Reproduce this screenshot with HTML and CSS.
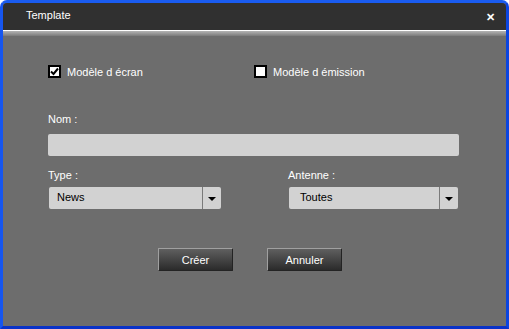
FILE: index.html
```html
<!DOCTYPE html>
<html lang="fr">
<head>
    <meta charset="UTF-8">
    <title>Template</title>
    <link rel="stylesheet" href="styles.css">
</head>
<body>
    <div class="window">
        <div class="titlebar">
            <span class="title">Template</span>
            <span class="close">&#x2715;</span>
        </div>
        <div class="separator"></div>
        <div class="content">
            <div class="checks">
                <label class="check">
                    <span class="box checked">
                        <svg width="9" height="9" viewBox="0 0 9 9"><path d="M1 4.5 L3.5 7 L8 1.5" fill="none" stroke="#000" stroke-width="2"/></svg>
                    </span>
                    Modèle d écran
                </label>
                <label class="check">
                    <span class="box"></span>
                    Modèle d émission
                </label>
            </div>

            <div class="field-label name-label">Nom :</div>
            <div class="textbox"></div>

            <div class="selects">
                <div class="group">
                    <div class="field-label">Type :</div>
                    <div class="select type-select">
                        <span class="select-value">News</span>
                        <span class="select-arrow"></span>
                    </div>
                </div>
                <div class="group">
                    <div class="field-label">Antenne :</div>
                    <div class="select antenna-select">
                        <span class="select-value">Toutes</span>
                        <span class="select-arrow"></span>
                    </div>
                </div>
            </div>

            <div class="buttons">
                <button type="button" class="btn">Créer</button>
                <button type="button" class="btn">Annuler</button>
            </div>
        </div>
    </div>
</body>
</html>
```

FILE: styles.css
```css
body {
    margin: 0;
    padding: 0;
    background-color: #ffffff;
    font-family: "Liberation Sans", Arial, sans-serif;
    font-size: 11px;
    color: #ffffff;
}
.window {
    width: 509px;
    height: 329px;
    box-sizing: border-box;
    border: 3px solid #0b45e0;
    border-top-color: #1a5cf0;
    border-left-color: #1656f0;
    border-bottom-color: #0a32c8;
    border-radius: 7px 7px 0 0;
    background-color: #6d6d6d;
    overflow: hidden;
}
.titlebar {
    height: 27px;
    background-color: #303030;
    display: flex;
    align-items: center;
    justify-content: space-between;
    padding: 0 11px 0 23px;
}
.title {
    font-size: 11px;
    margin-top: -4px;
}
.close {
    font-size: 11px;
    font-weight: bold;
    margin-top: 2px;
}
.separator {
    height: 5px;
    border-top: 1px solid #ffffff;
    background: linear-gradient(#b4b4b4, #7a7a7a);
}
.content {
    padding: 29px 44px 0 45px;
}
.checks {
    display: grid;
    grid-template-columns: 206px auto;
    height: 13px;
}
.check {
    display: flex;
    align-items: center;
    gap: 6px;
}
.box {
    width: 9px;
    height: 9px;
    border: 2px solid #000;
    background-color: #fff;
    display: flex;
    align-items: center;
    justify-content: center;
}
.field-label {
    height: 13px;
    line-height: 13px;
}
.name-label {
    margin-top: 35px;
}
.textbox {
    margin-top: 8px;
    width: 411px;
    height: 22px;
    background-color: #d2d2d2;
    border-radius: 2px;
}
.selects {
    display: grid;
    grid-template-columns: 240px 170px;
    margin-top: 13px;
}
.select {
    margin-top: 5px;
    height: 22px;
    background-color: #d2d2d2;
    border-radius: 2px;
    display: flex;
    color: #000;
}
.type-select {
    width: 172px;
    margin-left: 1px;
}
.antenna-select {
    width: 169px;
    margin-left: 1px;
}
.select-value {
    flex: 1;
    line-height: 21px;
    padding-left: 8px;
}
.antenna-select .select-value {
    padding-left: 11px;
}
.select-arrow {
    width: 18px;
    border-left: 1px solid #7a7a7a;
    position: relative;
}
.select-arrow::after {
    content: "";
    position: absolute;
    left: 5px;
    top: 10px;
    border-left: 4px solid transparent;
    border-right: 4px solid transparent;
    border-top: 4px solid #000;
}
.buttons {
    display: flex;
    gap: 34px;
    margin-top: 39px;
    padding-left: 110px;
}
.btn {
    width: 75px;
    height: 23px;
    padding: 0;
    font-family: "Liberation Sans", Arial, sans-serif;
    font-size: 11px;
    color: #ffffff;
    background: linear-gradient(#5f5f5f, #2b2b2b);
    border: 1px solid #232323;
    border-top-color: #a0a0a0;
    border-left-color: #a0a0a0;
    border-radius: 1px;
}
```
